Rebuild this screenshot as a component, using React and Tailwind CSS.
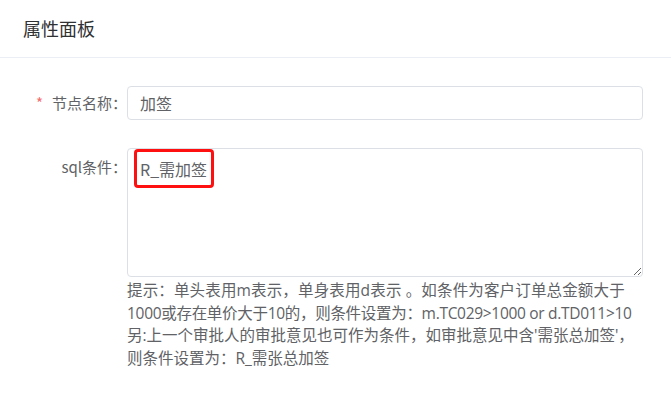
import React, { useState } from 'react';

const FONT = { fontFamily: '"Noto Sans CJK SC", "Noto Sans", sans-serif' };
const HINT_FONT = { fontFamily: '"Open Sans", "Noto Sans CJK SC", sans-serif' };

// 属性面板 - node property panel
const App = () => {
    const [name, setName] = useState('加签');
    const [sql, setSql] = useState('R_需加签');

    return (
        <div className="w-[671px] h-[407px] bg-white" style={FONT}>
            <div className="h-[58px] px-[23px] flex items-center border-b border-[#ebeef5]">
                <span className="text-[18px] text-[#303133]">属性面板</span>
            </div>

            <div className="pt-[28px]">
                <div className="flex items-center">
                    <label className="w-[127px] text-right text-[15px] leading-[22px] text-[#606266]">
                        <span className="text-[#f56c6c] mr-[9px]">*</span>节点名称：
                    </label>
                    <input
                        value={name}
                        onChange={e => setName(e.target.value)}
                        className="w-[516px] h-[34px] px-3 border border-[#dcdfe6] rounded-[4px] text-[16px] text-[#606266] outline-none"
                        style={FONT}
                    />
                </div>

                <div className="flex items-start mt-[28px]">
                    <label className="w-[127px] pt-[8px] text-right text-[15px] leading-[22px] text-[#606266]">
                        sql条件：
                    </label>
                    <div className="flex flex-col">
                        <div className="relative w-[516px]">
                            <textarea
                                value={sql}
                                onChange={e => setSql(e.target.value)}
                                className="block w-[516px] h-[129px] px-3 py-[8px] border border-[#dcdfe6] rounded-[4px] text-[16px] leading-[24px] text-[#606266] outline-none"
                                style={FONT}
                            />
                            {/* annotation highlight */}
                            <div className="absolute left-[7px] top-[1px] w-[80px] h-[39px] border-[3px] border-[#ff1010] rounded-[4px] pointer-events-none" />
                        </div>
                        <div className="mt-[2px] text-[15.5px] leading-[22.5px] text-[#606266] whitespace-nowrap" style={HINT_FONT}>
                            <div className="tracking-[0.15px]">提示：单头表用m表示，单身表用d表示 。如条件为客户订单总金额大于</div>
                            <div className="tracking-[-0.3px]">1000或存在单价大于10的，则条件设置为：m.TC029&gt;1000 or d.TD011&gt;10</div>
                            <div>另:上一个审批人的审批意见也可作为条件，如审批意见中含'需张总加签'，</div>
                            <div>则条件设置为：R_需张总加签</div>
                        </div>
                    </div>
                </div>
            </div>
        </div>
    );
};

export default App;
